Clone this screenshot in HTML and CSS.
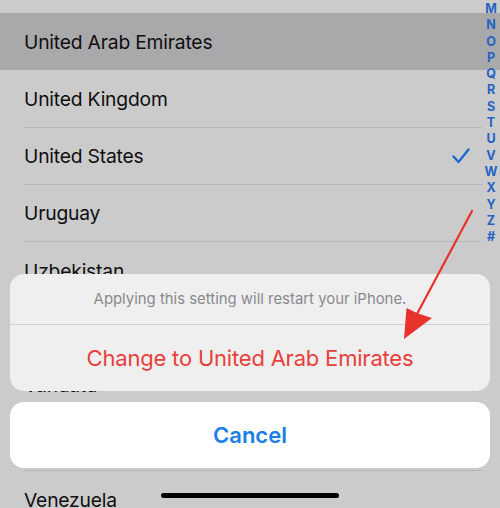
FILE: index.html
```html
<!DOCTYPE html>
<html>
<head>
<meta charset="utf-8">
<link rel="stylesheet" href="styles.css">
</head>
<body>
<div class="screen">
  <div class="list">
    <div class="row selected"><span class="name">United Arab Emirates</span></div>
    <div class="row"><span class="name">United Kingdom</span></div>
    <div class="row"><span class="name">United States</span>
      <svg class="check" width="18" height="16" viewBox="0 0 18 16"><path d="M1.5 8.5 L6.5 14 L16.5 1.5" fill="none" stroke="#1f68cf" stroke-width="2.4" stroke-linecap="round" stroke-linejoin="round"/></svg>
    </div>
    <div class="row"><span class="name">Uruguay</span></div>
    <div class="row"><span class="name">Uzbekistan</span></div>
    <div class="row"><span class="name">Vanuatu</span></div>
    <div class="row"><span class="name">Vanuatu</span></div>
    <div class="row"><span class="name">Vatican City</span></div>
    <div class="row"><span class="name">Venezuela</span></div>
  </div>

  <div class="index">
    <span>M</span><span>N</span><span>O</span><span>P</span><span>Q</span><span>R</span><span>S</span><span>T</span><span>U</span><span>V</span><span>W</span><span>X</span><span>Y</span><span>Z</span><span>#</span>
  </div>

  <div class="sheet">
    <div class="group">
      <div class="message">Applying this setting will restart your iPhone.</div>
      <div class="action destructive">Change to United Arab Emirates</div>
    </div>
    <div class="cancel">Cancel</div>
  </div>

  <svg class="arrow" width="500" height="508" viewBox="0 0 500 508">
    <line x1="472" y1="211" x2="417" y2="314" stroke="#e8322c" stroke-width="2.2" stroke-linecap="round"/>
    <path d="M404 339 L406.5 308 L418 313.5 L432 318 Z" fill="#e8322c"/>
  </svg>

  <div class="home"></div>
</div>
</body>
</html>
```
FILE: styles.css
```css
html, body {
  margin: 0;
  padding: 0;
}
body {
  background: #cbcbcb;
  font-family: Inter, "Liberation Sans", sans-serif;
}
.screen {
  position: relative;
  width: 500px;
  height: 508px;
  overflow: hidden;
  background: #cbcbcb;
}
.list {
  padding-top: 13px;
}
.row {
  height: 57.25px;
  box-sizing: border-box;
  display: flex;
  align-items: center;
  padding-left: 24px;
  padding-right: 30px;
  position: relative;
  font-size: 19.3px;
  color: #0f0f0f;
  letter-spacing: -0.2px;
}
.row::after {
  content: "";
  position: absolute;
  left: 24px;
  right: 18px;
  bottom: 0;
  height: 1px;
  background: #b6b6b6;
}
.row.selected {
  background: #a9a9ab;
}
.row.selected::after {
  display: none;
}
.name {
  flex: 1;
}
.index {
  position: absolute;
  top: 1px;
  right: 0;
  width: 18px;
  display: flex;
  flex-direction: column;
  align-items: center;
  color: #2563c4;
  font-size: 12.5px;
  font-weight: 700;
  line-height: 16.3px;
}
.sheet {
  position: absolute;
  left: 10px;
  right: 10px;
  top: 274px;
  display: flex;
  flex-direction: column;
  gap: 11px;
}
.group {
  background: #efeff0;
  border-radius: 14px;
  overflow: hidden;
}
.message {
  height: 51px;
  display: flex;
  align-items: center;
  justify-content: center;
  font-size: 14.9px;
  color: #8a8a8e;
  border-bottom: 1px solid #cfcfd2;
  box-sizing: border-box;
}
.action {
  height: 66px;
  display: flex;
  align-items: center;
  justify-content: center;
  font-size: 22px;
  letter-spacing: -0.2px;
}
.destructive {
  color: #e8403a;
}
.cancel {
  height: 66px;
  background: #ffffff;
  border-radius: 14px;
  display: flex;
  align-items: center;
  justify-content: center;
  font-size: 22px;
  font-weight: 600;
  color: #1a7ee8;
}
.arrow {
  position: absolute;
  left: 0;
  top: 0;
}
.home {
  position: absolute;
  left: 161px;
  top: 493px;
  width: 178px;
  height: 5px;
  border-radius: 3px;
  background: #000;
}
```
